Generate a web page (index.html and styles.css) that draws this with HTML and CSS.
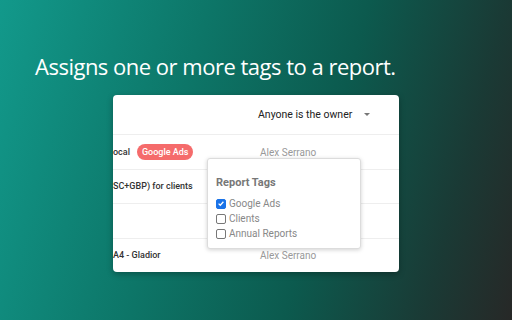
FILE: index.html
```html
<!DOCTYPE html>
<html>
<head>
<meta charset="utf-8">
<link rel="stylesheet" href="styles.css">
</head>
<body>
<div class="page">
  <h1 class="title">Assigns one or more tags to a report.</h1>
  <div class="card">
    <div class="card-head">
      <span class="owner">Anyone is the owner</span>
      <span class="caret"></span>
    </div>
    <div class="row">
      <div class="name"><span class="clip">ocal</span><span class="pill">Google Ads</span></div>
      <div class="person">Alex Serrano</div>
    </div>
    <div class="row">
      <div class="name"><span class="clip">SC+GBP) for clients</span></div>
      <div class="person"></div>
    </div>
    <div class="row">
      <div class="name"></div>
      <div class="person"></div>
    </div>
    <div class="row last">
      <div class="name"><span class="clip">A4 - Gladior</span></div>
      <div class="person">Alex Serrano</div>
    </div>
    <div class="popup">
      <div class="popup-title">Report Tags</div>
      <ul class="tags">
        <li class="tag"><span class="box checked"><svg viewBox="0 0 10 10" width="9" height="9"><path d="M2 5.2 L4.1 7.2 L8 2.8" fill="none" stroke="#fff" stroke-width="1.6"/></svg></span>Google Ads</li>
        <li class="tag"><span class="box"></span>Clients</li>
        <li class="tag"><span class="box"></span>Annual Reports</li>
      </ul>
    </div>
  </div>
</div>
</body>
</html>
```
FILE: styles.css
```css
html, body {
  margin: 0;
  padding: 0;
}
body {
  width: 512px;
  height: 320px;
  overflow: hidden;
  background: linear-gradient(105deg, #12998b 0%, #0d7668 35%, #0c5a4e 62%, #1a3a35 85%, #272827 100%);
  font-family: Roboto, "Liberation Sans", sans-serif;
}
.page {
  display: flex;
  flex-direction: column;
  padding: 50px 0 0 35px;
}
.title {
  margin: 0;
  font-family: "Open Sans", "Liberation Sans", sans-serif;
  font-weight: 400;
  font-size: 22px;
  line-height: 32px;
  color: #fff;
  letter-spacing: -0.5px;
}
.card {
  position: relative;
  margin: 13px 0 0 78px;
  width: 286px;
  height: 177px;
  background: #fff;
  border-radius: 4px;
  box-shadow: 0 2px 6px rgba(0,0,0,0.3);
  overflow: hidden;
  display: flex;
  flex-direction: column;
}
.card-head {
  height: 40px;
  display: flex;
  align-items: center;
  padding-left: 145px;
  border-bottom: 1px solid #eeeeee;
}
.owner {
  font-size: 10.5px;
  color: #222;
}
.caret {
  margin-left: 12px;
  width: 0;
  height: 0;
  border-left: 3px solid transparent;
  border-right: 3px solid transparent;
  border-top: 3px solid #777;
}
.row {
  height: 34px;
  display: flex;
  align-items: center;
  border-bottom: 1px solid #eeeeee;
}
.row.last {
  border-bottom: none;
}
.name {
  width: 147px;
  display: flex;
  align-items: center;
  font-size: 9px;
  font-weight: 500;
  color: #333;
  white-space: nowrap;
}
.pill {
  margin-left: 7px;
  height: 16px;
  padding: 0 5px;
  border-radius: 8px;
  background: #f56b6b;
  color: #fff;
  font-size: 9px;
  font-weight: 500;
  display: flex;
  align-items: center;
}
.person {
  font-size: 10px;
  color: #999;
}
.popup {
  position: absolute;
  left: 94px;
  top: 63px;
  width: 154px;
  height: 91px;
  background: #fff;
  border: 1px solid #dcdcdc;
  border-radius: 3px;
  box-shadow: 0 1px 4px rgba(0,0,0,0.18);
  padding: 17px 0 0 8px;
  box-sizing: border-box;
}
.popup-title {
  font-size: 11px;
  font-weight: 700;
  color: #777;
  margin-bottom: 7px;
}
.tags {
  list-style: none;
  margin: 0;
  padding: 0;
}
.tag {
  display: flex;
  align-items: center;
  height: 15px;
  font-size: 10px;
  color: #888;
}
.box {
  width: 8px;
  height: 8px;
  border: 1px solid #777;
  border-radius: 2px;
  margin-right: 3px;
  display: flex;
  align-items: center;
  justify-content: center;
}
.box.checked {
  background: #1a73e8;
  border-color: #1a73e8;
}
```
